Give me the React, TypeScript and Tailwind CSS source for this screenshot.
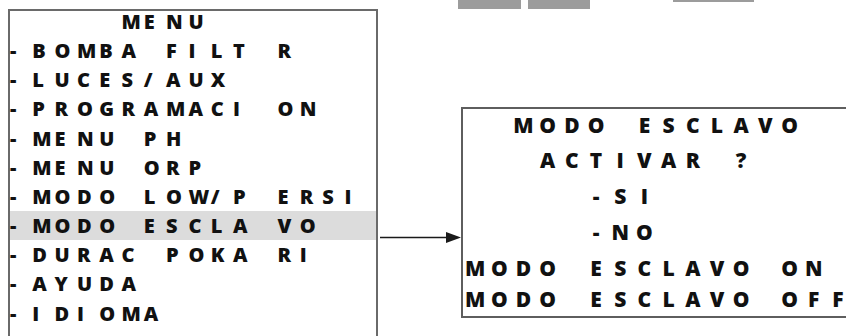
const menuRows = [
  '     MENU',
  '-BOMBA FILT R',
  '-LUCES/AUX',
  '-PROGRAMACI ON',
  '-MENU PH',
  '-MENU ORP',
  '-MODO LOW/P ERSI',
  '-MODO ESCLA VO',
  '-DURAC POKA RI',
  '-AYUDA',
  '-IDIOMA',
];

const SELECTED = 7;

const slaveRows = [
  { text: '  MODO ESCLAVO', h: 'h-[34px]' },
  { text: '   ACTIVAR ?', h: 'h-[36px]' },
  { text: '     -SI', h: 'h-[36px]' },
  { text: '     -NO', h: 'h-[36px]' },
  { text: 'MODO ESCLAVO ON', h: 'h-[35px]' },
  { text: 'MODO ESCLAVO OFF', h: 'h-[28px]' },
];

function LcdLine({ text, cell, center }: { text: string; cell: string; center?: boolean }) {
  return (
    <div className="flex">
      {text.split('').map((ch, i) => (
        <span key={i} className={`${cell} shrink-0 ${center ? 'text-center' : 'text-left'}`}>
          {ch === ' ' ? '\u00a0' : ch}
        </span>
      ))}
    </div>
  );
}

export default function App() {
  return (
    <div
      className="w-[846px] h-[336px] overflow-hidden bg-white flex text-[#111] font-extrabold"
      style={{ fontFamily: "'Open Sans', 'Liberation Sans', sans-serif" }}
    >
      {/* ── Main menu screen ── */}
      <div className="pl-[8px] pt-[9px] shrink-0">
        <div className="w-[370px] h-[360px] border-2 border-[#6a6a6a]">
          <div className="-mt-[4px] text-[20px] leading-[29.15px]">
            {menuRows.map((row, i) => (
              <div key={i} className={i === SELECTED ? 'bg-[#dcdcdc]' : ''}>
                <LcdLine text={row} cell="w-[22.3px]" />
              </div>
            ))}
          </div>
        </div>
      </div>

      {/* ── Right side ── */}
      <div className="flex-1 flex flex-col min-w-0">
        {/* cropped bars from the figure above */}
        <div className="flex items-start ml-[80px] h-[9px]">
          <div className="w-[63px] h-[9px] bg-[#9c9c9c]" />
          <div className="w-[62px] h-[9px] bg-[#9c9c9c] ml-[7px]" />
          <div className="w-[81px] h-[2px] bg-[#9c9c9c] ml-[83px]" />
        </div>

        <div className="flex items-start mt-[98px]">
          {/* arrow */}
          <svg className="w-[83px] h-[13px] mt-[124px] shrink-0" viewBox="0 0 83 13">
            <line x1="2" y1="6.5" x2="72" y2="6.5" stroke="#1a1a1a" strokeWidth="1.6" />
            <polygon points="68,1 83,6.5 68,12" fill="#1a1a1a" />
          </svg>

          {/* slave mode screen */}
          <div className="w-[420px] h-[211px] border-2 border-[#5e5e5e] shrink-0 text-[21px]">
            {slaveRows.map((r, i) => (
              <div key={i} className={`${r.h} flex items-center`}>
                <LcdLine text={r.text} cell="w-[24.2px]" center />
              </div>
            ))}
          </div>
        </div>
      </div>
    </div>
  );
}
